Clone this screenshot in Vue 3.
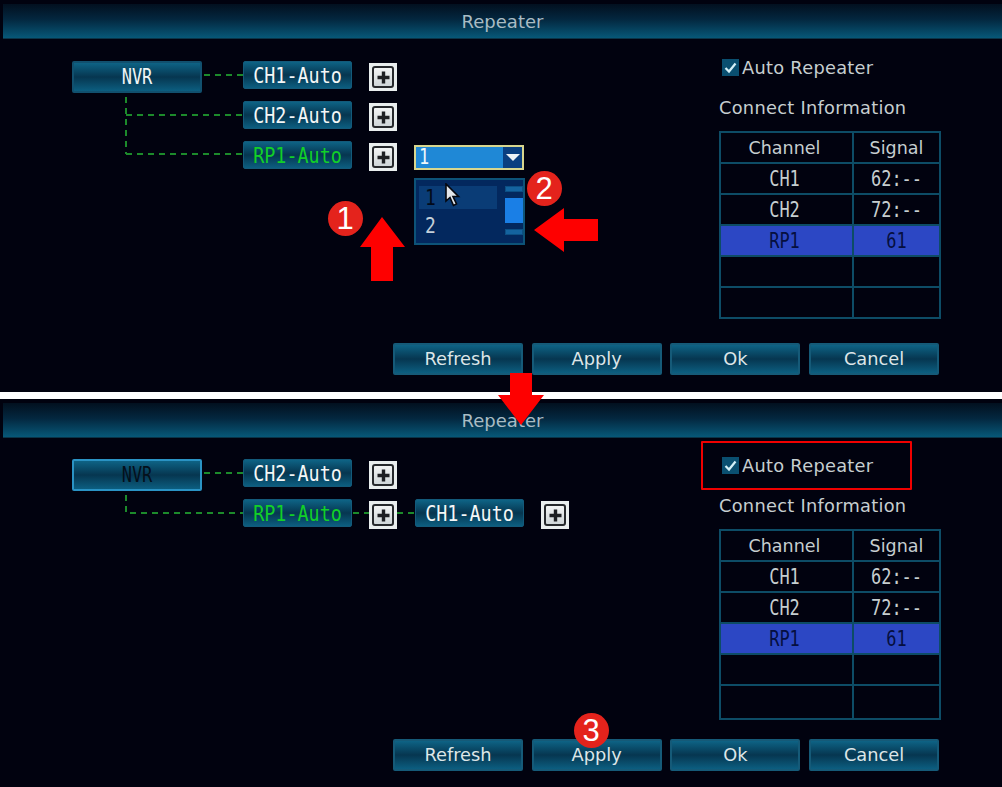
<script setup>
const panels = [
  {
    id: 'top', focused: false, dashed: [
      'M204 36H243', 'M126 58V115', 'M126 76H243', 'M126 115H243'
    ],
    nodes: [
      { t: 'CH1-Auto', x: 243, y: 22 },
      { t: 'CH2-Auto', x: 243, y: 62 },
      { t: 'RP1-Auto', x: 243, y: 102, green: true }
    ],
    plus: [{ x: 369, y: 24 }, { x: 369, y: 64 }, { x: 369, y: 104 }],
    dropdown: true
  },
  {
    id: 'bottom', focused: true, dashed: [
      'M204 36H243', 'M126 58V76H243', 'M353 76H415'
    ],
    nodes: [
      { t: 'CH2-Auto', x: 243, y: 22 },
      { t: 'RP1-Auto', x: 243, y: 62, green: true },
      { t: 'CH1-Auto', x: 415, y: 62 }
    ],
    plus: [{ x: 369, y: 24 }, { x: 369, y: 64 }, { x: 541, y: 64 }],
    dropdown: false
  }
]
const rows = [
  { c: 'CH1', s: '62:--' },
  { c: 'CH2', s: '72:--' },
  { c: 'RP1', s: '61', active: true },
  { c: '', s: '' },
  { c: '', s: '' }
]
const buttons = ['Refresh', 'Apply', 'Ok', 'Cancel']
const badges = [
  { n: 1, x: 345, y: 218 },
  { n: 2, x: 544, y: 188 },
  { n: 3, x: 591, y: 730 }
]
const pos = (o) => ({ left: o.x + 'px', top: o.y + 'px' })
</script>

<template>
  <div class="page">
    <template v-for="(p, i) in panels" :key="p.id">
      <section class="panel">
        <header class="title">Repeater</header>
        <div class="body">
          <div class="tree">
            <svg class="links" width="700" height="300">
              <path v-for="d in p.dashed" :key="d" :d="d" />
            </svg>
            <div class="nvr" :class="{ focused: p.focused }"><span class="tall">NVR</span></div>
            <div
              v-for="n in p.nodes"
              :key="n.t"
              class="node"
              :class="{ green: n.green }"
              :style="pos(n)"
            ><span class="tall">{{ n.t }}</span></div>
            <div v-for="(b, j) in p.plus" :key="j" class="plus" :style="pos(b)">
              <span class="plus-ring">
                <svg width="15" height="15" viewBox="0 0 15 15">
                  <path d="M7.5 1.5v12M1.5 7.5h12" />
                </svg>
              </span>
            </div>
            <template v-if="p.dropdown">
              <div class="select">
                <span class="select-value tall">1</span>
                <span class="select-arrow"><i></i></span>
              </div>
              <div class="list">
                <div class="options">
                  <div class="opt on"><span class="tall">1</span></div>
                  <div class="opt"><span class="tall">2</span></div>
                </div>
                <div class="scroll">
                  <i></i><b></b><i></i>
                </div>
                <svg class="cursor" width="16" height="24" viewBox="0 0 16 24">
                  <path d="M1 1V18L5 14.5L8.5 22.5L11.5 21L8 13.5H13.5Z" />
                </svg>
              </div>
            </template>
          </div>
          <aside class="side">
            <label class="check">
              <span class="box">
                <svg width="17" height="17" viewBox="0 0 17 17"><path d="M3.5 9l3.5 3.5L13.5 4.5" /></svg>
              </span>
              <span>Auto Repeater</span>
            </label>
            <div class="info">Connect Information</div>
            <div class="table">
              <div class="cell head">Channel</div>
              <div class="cell head">Signal</div>
              <template v-for="(r, k) in rows" :key="k">
                <div class="cell mono" :class="{ active: r.active, last: k === 4 }"><span class="tall">{{ r.c }}</span></div>
                <div class="cell mono" :class="{ active: r.active, last: k === 4 }"><span class="tall">{{ r.s }}</span></div>
              </template>
            </div>
          </aside>
        </div>
        <footer class="actions">
          <button v-for="b in buttons" :key="b" class="btn">{{ b }}</button>
        </footer>
      </section>
      <div v-if="i === 0" class="divider"></div>
    </template>

    <svg class="arrows" width="1002" height="787">
      <polygon points="382,217 405,247 393,247 393,281 371,281 371,247 360,247" />
      <polygon points="534,230 564,208 564,219 598,219 598,241 564,241 564,252" />
      <polygon points="510,373 532,373 532,395 544,395 521,425 498,395 510,395" />
    </svg>
    <div class="callout"></div>
    <div v-for="b in badges" :key="b.n" class="badge" :style="pos(b)">{{ b.n }}</div>
  </div>
</template>

<style scoped>
.page {
  position: relative;
  width: 1002px;
  height: 787px;
  overflow: hidden;
  background: #01020f;
  font-family: "DejaVu Sans", sans-serif;
}
.panel {
  height: 392px;
  box-sizing: border-box;
  padding-top: 4px;
  padding-left: 3px;
  background: #01020f;
  display: flex;
  flex-direction: column;
}
.divider + .panel {
  height: 388px;
}
.divider + .panel .tree,
.divider + .panel .side {
  margin-top: -1px;
}
.divider + .panel .body {
  height: 301px;
}
.divider + .panel .cell.last {
  height: 34px;
}
.divider + .panel .table {
  grid-auto-rows: auto;
}
.divider {
  height: 7px;
  background: #fff;
}
.title {
  height: 35px;
  flex: none;
  display: flex;
  align-items: center;
  justify-content: center;
  color: #a9bcc4;
  font-size: 18px;
  background: linear-gradient(#02101f, #03273f 45%, #075878);
  border-bottom: 1px solid #0a3448;
  box-sizing: border-box;
}
.body {
  display: flex;
  height: 304px;
  flex: none;
}
.tree {
  position: relative;
  width: 716px;
  margin-left: -3px;
}
.links {
  position: absolute;
  left: 0;
  top: 0;
}
.links path {
  fill: none;
  stroke: #1c8a2b;
  stroke-width: 2;
  stroke-dasharray: 6 5;
}
.tall {
  display: inline-block;
  transform: scaleY(1.2);
}
.nvr {
  position: absolute;
  left: 72px;
  top: 22px;
  width: 130px;
  height: 32px;
  box-sizing: border-box;
  border: 2px solid #11506e;
  border-radius: 2px;
  background: linear-gradient(#0e6385, #063650 50%, #0c5e80);
  color: #f0f5f5;
  font-family: "DejaVu Sans Mono", monospace;
  font-size: 17px;
  display: flex;
  align-items: center;
  justify-content: center;
}
.nvr.focused {
  border-color: #2a93c4;
  color: #04101c;
}
.node {
  position: absolute;
  width: 109px;
  height: 28px;
  box-sizing: border-box;
  border: 1px solid #135a7a;
  border-radius: 2px;
  background: linear-gradient(#0e6385, #063650 50%, #0c5e80);
  color: #f4f7f7;
  font-family: "DejaVu Sans Mono", monospace;
  font-size: 18.4px;
  display: flex;
  align-items: center;
  justify-content: center;
}
.node.green {
  color: #12d028;
}
.plus {
  position: absolute;
  width: 28px;
  height: 28px;
  box-sizing: border-box;
  padding: 3px;
  background: #e9eeee;
}
.plus-ring {
  display: flex;
  align-items: center;
  justify-content: center;
  height: 100%;
  box-sizing: border-box;
  border: 2px solid #26292c;
  border-radius: 3px;
  background: linear-gradient(#f2f4f4, #cfd6d8);
}
.plus-ring path {
  fill: none;
  stroke: #1d1f22;
  stroke-width: 3.4;
}
.select {
  position: absolute;
  left: 414px;
  top: 106px;
  width: 110px;
  height: 25px;
  box-sizing: border-box;
  border: 2px solid #d8d68e;
  background: #1f88d6;
  display: flex;
  justify-content: space-between;
  color: #eef7fb;
  font-family: "DejaVu Sans Mono", monospace;
  font-size: 17px;
}
.select-value {
  padding-left: 3px;
  line-height: 21px;
}
.select-arrow {
  width: 19px;
  background: #0a3f80;
  display: flex;
  align-items: center;
  justify-content: center;
}
.select-arrow i {
  width: 0;
  height: 0;
  border-left: 7px solid transparent;
  border-right: 7px solid transparent;
  border-top: 7px solid #eef3f6;
}
.list {
  position: absolute;
  left: 414px;
  top: 139px;
  width: 111px;
  height: 67px;
  box-sizing: border-box;
  border: 2px solid #0d5378;
  background: #03285e;
  display: flex;
  justify-content: space-between;
  padding: 6px 0 0 3px;
}
.options {
  width: 78px;
  font-family: "DejaVu Sans Mono", monospace;
  font-size: 18px;
  color: #c4d0da;
}
.opt {
  height: 23px;
  line-height: 23px;
  padding-left: 6px;
  margin-bottom: 5px;
}
.opt.on {
  background: #0a3c76;
  color: #020a1a;
}
.scroll {
  width: 19px;
  display: flex;
  flex-direction: column;
  gap: 6px;
  align-items: center;
}
.scroll i {
  width: 18px;
  height: 6px;
  background: #14639f;
  box-sizing: border-box;
  border: 1px solid #0c4f84;
  flex: none;
}
.scroll b {
  width: 18px;
  height: 25px;
  background: #1a7fe6;
  flex: none;
}
.cursor {
  position: absolute;
  left: 29px;
  top: 3px;
}
.cursor path {
  fill: #e2e6ea;
  stroke: #05080f;
  stroke-width: 1.6;
}
.side {
  width: 286px;
  padding-left: 3px;
  color: #c6ced0;
  font-size: 17.8px;
  letter-spacing: 0.28px;
  box-sizing: border-box;
}
.check {
  display: flex;
  align-items: center;
  gap: 3px;
  margin: 20px 0 0 3px;
  height: 17px;
  white-space: nowrap;
}
.box {
  width: 17px;
  height: 17px;
  background: #0a4f70;
  display: block;
  flex: none;
}
.box path {
  fill: none;
  stroke: #d4f0f8;
  stroke-width: 2.2;
}
.info {
  margin-top: 21px;
  height: 22px;
  line-height: 22px;
  white-space: nowrap;
}
.table {
  margin-top: 12px;
  width: 222px;
  display: grid;
  grid-template-columns: 133px 87px;
  grid-auto-rows: 31px;
  box-sizing: border-box;
  border-top: 2px solid #0d4c66;
  border-left: 2px solid #0d4c66;
  letter-spacing: 0;
}
.divider + .panel .cell {
  min-height: 31px;
}
.cell {
  border-right: 2px solid #0d4c66;
  border-bottom: 2px solid #0d4c66;
  display: flex;
  align-items: center;
  justify-content: center;
  color: #c6ced0;
  box-sizing: border-box;
  font-size: 17.5px;
}
.cell:nth-child(odd) {
  padding-right: 4px;
}
.cell.mono {
  font-family: "DejaVu Sans Mono", monospace;
  font-size: 17px;
}
.cell.active {
  background: #2c47c4;
  color: #050f40;
}
.actions {
  display: flex;
  gap: 8.7px;
  padding-left: 390px;
}
.btn {
  width: 130px;
  height: 32px;
  padding: 0 0 2px;
  box-sizing: border-box;
  border: 2px solid #155a78;
  border-radius: 2px;
  background: linear-gradient(#0e6385, #063650 50%, #0c5e80);
  color: #dde6e8;
  font-family: "DejaVu Sans", sans-serif;
  font-size: 17.8px;
}
.arrows {
  position: absolute;
  left: 0;
  top: 0;
  pointer-events: none;
}
.arrows polygon {
  fill: #fe0000;
}
.callout {
  position: absolute;
  left: 701px;
  top: 441px;
  width: 211px;
  height: 49px;
  box-sizing: border-box;
  border: 2px solid #f00000;
  border-radius: 1px;
}
.badge {
  position: absolute;
  width: 35px;
  height: 35px;
  margin: -17.5px 0 0 -17.5px;
  border-radius: 50%;
  background: #e4231c;
  color: #fff;
  font-family: "Liberation Sans", sans-serif;
  font-size: 31px;
  line-height: 35px;
  text-align: center;
}
</style>
